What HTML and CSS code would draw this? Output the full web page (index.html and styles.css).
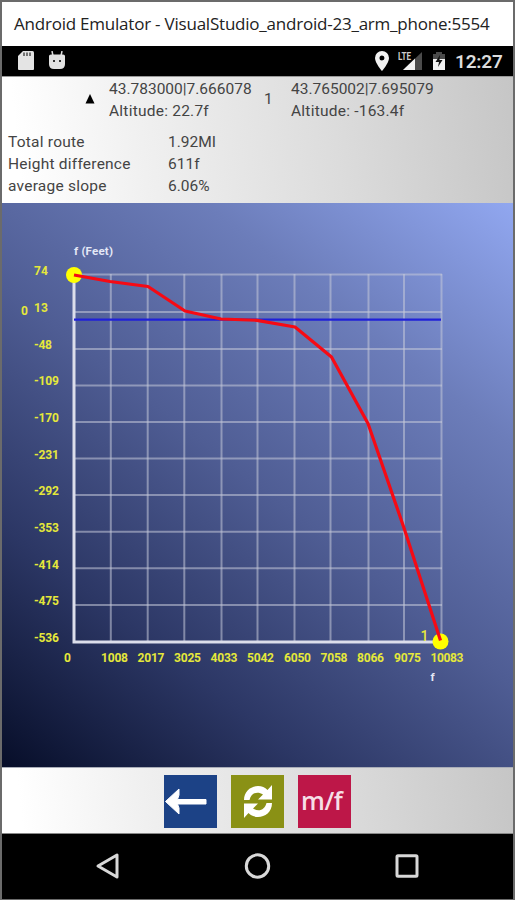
FILE: index.html
```
<!DOCTYPE html>
<html lang="en">
<head>
<meta charset="utf-8">
<title>Android Emulator</title>
<link rel="stylesheet" href="styles.css">
</head>
<body>
<div class="window">
  <header class="titlebar">Android Emulator - VisualStudio_android-23_arm_phone:5554</header>
  <div class="status">
    <svg class="sd" width="16" height="20" viewBox="0 0 16 20"><path d="M5 0H14.500Q16 0 16 1.500V18Q16 19 15 19H1Q0 19 0 18V5Z" fill="#e4e4e4"/><path d="M6 1.500v3.500M9 1.500v3.500M12 1.500v3.500" stroke="#666" stroke-width="1.800"/></svg>
    <svg class="droid" width="16" height="20" viewBox="0 0 16 20"><path d="M3 0l1 5M13 0l-1 5" stroke="#ddd" stroke-width="1.500"/><path d="M0 5Q0 3.500 2 3.500H14Q16 3.500 16 5V13Q16 18 11 18H5Q0 18 0 13Z" fill="#e2e2e2"/><path d="M4 10h2M10 10h2" stroke="#333" stroke-width="1.800"/></svg>
    <span class="fill"></span>
    <svg class="pin" width="14" height="20" viewBox="0 0 14 20"><path fill-rule="evenodd" d="M7 0a7 7 0 0 1 7 7c0 5-7 13-7 13S0 12 0 7a7 7 0 0 1 7-7Zm0 4.500a2.500 2.500 0 1 0 0 5a2.500 2.500 0 0 0 0-5Z" fill="#f2f2f2"/></svg>
    <svg class="signal" width="25" height="20" viewBox="0 0 25 20"><path d="M24 1V19H5Z" fill="#4b4b4b"/><path d="M17 7.600V19H5Z" fill="#f2f2f2"/><text x="0" y="9" textLength="13" lengthAdjust="spacingAndGlyphs">LTE</text></svg>
    <svg class="battery" width="14" height="20" viewBox="0 0 14 20"><path d="M4 1H10V3H13V8H1V3H4Z" fill="#4b4b4b"/><path d="M1 8H13V19H1Z" fill="#f2f2f2"/><path d="M8 4L3.500 11H7L6 16L10.500 9H7.500Z" fill="#111"/></svg>
    <span class="clock">12:27</span>
  </div>
  <section class="info">
    <div class="points">
      <svg class="marker" width="10" height="10" viewBox="0 0 10 10"><path d="M5 0L9.500 9.500H.5Z" fill="#000"/></svg>
      <div class="point first"><p>43.783000|7.666078</p><p class="alt">Altitude: 22.7f</p></div>
      <span class="num">1</span>
      <div class="point"><p>43.765002|7.695079</p><p class="alt">Altitude: -163.4f</p></div>
    </div>
    <dl class="stats">
      <dt>Total route</dt><dd>1.92MI</dd>
      <dt>Height difference</dt><dd>611f</dd>
      <dt>average slope</dt><dd>6.06%</dd>
    </dl>
  </section>
  <main class="chart">
    <svg width="511" height="564" viewBox="2 203 511 564">
      <g class="grid">
        <path d="M74 274.500H442M74 312H442M74 349H442M74 385.500H442M74 422H442M74 458.500H442M74 495H442M74 531.700H442M74 568.300H442M74 605H442"/>
        <path d="M110.800 274V642M147.700 274V642M184.300 274V642M221.500 274V642M257.500 274V642M294.500 274V642M330.500 274V642M368.500 274V642M404 274V642M441.500 274V642"/>
      </g>
      <path class="axis" d="M74 275V642H441"/>
      <path class="zero" d="M74 319.700H441"/>
      <circle class="end-point" cx="74" cy="275" r="8"/>
      <circle class="end-point" cx="440.500" cy="641.500" r="8"/>
      <path class="route" d="M74 275L110 281.500L148 286.500L185 311L221 319L257 320.300L295 327L331.500 357L368 423.500L404 528L440.500 640.500"/>
      <g class="labels">
        <text x="34" y="275" textLength="14">74</text>
        <text x="21" y="315" textLength="7">0</text>
        <text x="34" y="312" textLength="14">13</text>
        <text x="34" y="348.500" textLength="18">-48</text>
        <text x="34" y="385" textLength="25">-109</text>
        <text x="34" y="421.500" textLength="25">-170</text>
        <text x="34" y="458.500" textLength="25">-231</text>
        <text x="34" y="495" textLength="25">-292</text>
        <text x="34" y="531.500" textLength="25">-353</text>
        <text x="34" y="568.500" textLength="25">-414</text>
        <text x="34" y="605" textLength="25">-475</text>
        <text x="34" y="641.500" textLength="25">-536</text>
        <text x="64" y="661.500" textLength="7">0</text>
        <text x="101" y="661.500" textLength="27">1008</text>
        <text x="137.500" y="661.500" textLength="27">2017</text>
        <text x="174" y="661.500" textLength="27">3025</text>
        <text x="210.500" y="661.500" textLength="27">4033</text>
        <text x="247" y="661.500" textLength="27">5042</text>
        <text x="284" y="661.500" textLength="27">6050</text>
        <text x="320.500" y="661.500" textLength="27">7058</text>
        <text x="357" y="661.500" textLength="27">8066</text>
        <text x="394" y="661.500" textLength="27">9075</text>
        <text x="430.500" y="661.500" textLength="33">10083</text>
        <text class="end" x="420.500" y="641">1</text>
        <text class="unit" x="74" y="255" textLength="39">f (Feet)</text>
        <text class="unit" x="430.500" y="681">f</text>
      </g>
    </svg>
  </main>
  <div class="toolbar">
    <button class="back"><svg width="53" height="53" viewBox="0 0 53 53"><path d="M1.500 26.500L15 14V20L13.500 24.500H42V29H13.500L15 33V39Z" fill="#fff" stroke="#fff" stroke-linejoin="round"/></svg></button>
    <button class="refresh"><svg width="53" height="53" viewBox="0 0 53 53"><g fill="#fff"><path d="M13 25C13 16 20 11 27 11C31 11 34 12.500 36.500 15L41 10V24.500H27L32 19.500C26 15.500 20 18.500 18.500 25Z"/><path d="M41 28C41 37 34 42 27 42C23 42 20 40.500 17.500 38L13 43V28.500H27L22 33.500C28 37.500 34 34.500 35.500 28Z"/></g></svg></button>
    <button class="units">m/f</button>
  </div>
  <nav class="nav">
    <svg width="26" height="28" viewBox="0 0 26 28"><path d="M3 14L22 3V25Z"/></svg>
    <svg width="28" height="28" viewBox="0 0 28 28"><circle cx="13.500" cy="14" r="11.200"/></svg>
    <svg width="26" height="28" viewBox="0 0 26 28"><rect x="3" y="3.700" width="20" height="20.600" rx="1"/></svg>
  </nav>
</div>
</body>
</html>
```
FILE: styles.css
```
* { box-sizing: border-box; }
body { margin: 0; }
p, dl, dd { margin: 0; }
svg { display: block; flex: none; }
.window {
  width: 515px;
  height: 900px;
  border: 2px solid #6b6b6b;
  border-bottom-width: 1px;
  display: flex;
  flex-direction: column;
  font-family: Roboto, sans-serif;
  background: #000;
}
.titlebar {
  height: 44px;
  padding-left: 12px;
  background: #fff;
  color: #222;
  font: 17px/43px "Open Sans", sans-serif;
  letter-spacing: -0.22px;
  white-space: nowrap;
}
.status { height: 30px; display: flex; align-items: center; padding: 0 10px 0 16px; background: #000; }
.droid { margin-left: 15px; }
.fill { flex: 1; }
.signal { margin-left: 9px; }
.signal text { font: 700 10px Roboto, sans-serif; fill: #ccc; }
.battery { margin-left: 9px; }
.clock { width: 48px; margin-left: 9px; color: #ddd; font-size: 19px; font-weight: 600; white-space: nowrap; letter-spacing: -.2px; }
.info, .toolbar { background: linear-gradient(84deg, #fff 4%, #f0f0f0 28%, #dcdcdc 65%, #c6c6c6 100%); }
.info { height: 127px; color: #444; font-size: 15.500px; line-height: 22px; border-top: 1px solid #999; }
.points { display: flex; height: 53px; padding: 1px 0 0 83px; }
.marker { margin-top: 16px; }
.point { white-space: nowrap; }
.alt, dt { letter-spacing: .23px; }
.first { margin-left: 14px; width: 144px; }
.num { width: 10px; margin: 10px 17px 0 11px; }
.stats { display: grid; grid-template-columns: 160px 1fr; padding: 1px 0 0 6px; }
.chart {
  height: 564px;
  background: linear-gradient(38deg, #070e29 0%, #2c3765 25%, #4f5d94 50%, #6c7dba 75%, #91a7f0 100%);
}
.grid path { fill: none; stroke: #c4c8d8; stroke-opacity: .55; stroke-width: 2; }
.axis { fill: none; stroke: #dcdeeb; stroke-width: 3; }
.zero { stroke: #2020d8; stroke-width: 2.200; }
.route { fill: none; stroke: #f60a14; stroke-width: 3.200; stroke-linejoin: round; }
.end-point { fill: #ff0; }
.labels text { font: 700 12px Roboto, sans-serif; fill: #e5e83a; }
.labels .end { font-size: 14px; font-weight: 500; }
.labels .unit { font-size: 11.500px; fill: #e4e8f6; }
.toolbar {
  height: 67px;
  display: flex;
  justify-content: center;
  gap: 14px;
  padding-top: 7px;
  border-top: 1px solid #a9adb8;
  border-bottom: 1px solid #888;
}
button { width: 53px; height: 53px; padding: 0; border: 0; }
.back { background: #1c4286; }
.refresh { background: #8a9115; }
.units { background: #bd1748; color: #f6dfe7; font: 600 25px/50px "Open Sans", sans-serif; text-align: left; padding: 0 0 3px 3px; letter-spacing: -.4px; white-space: nowrap; }
.nav { flex: 1; display: flex; justify-content: space-between; padding: 18px 93px 0; background: #000; }
.nav path, .nav circle, .nav rect { fill: none; stroke: #d8d8d8; stroke-width: 3; stroke-linejoin: round; }
```
